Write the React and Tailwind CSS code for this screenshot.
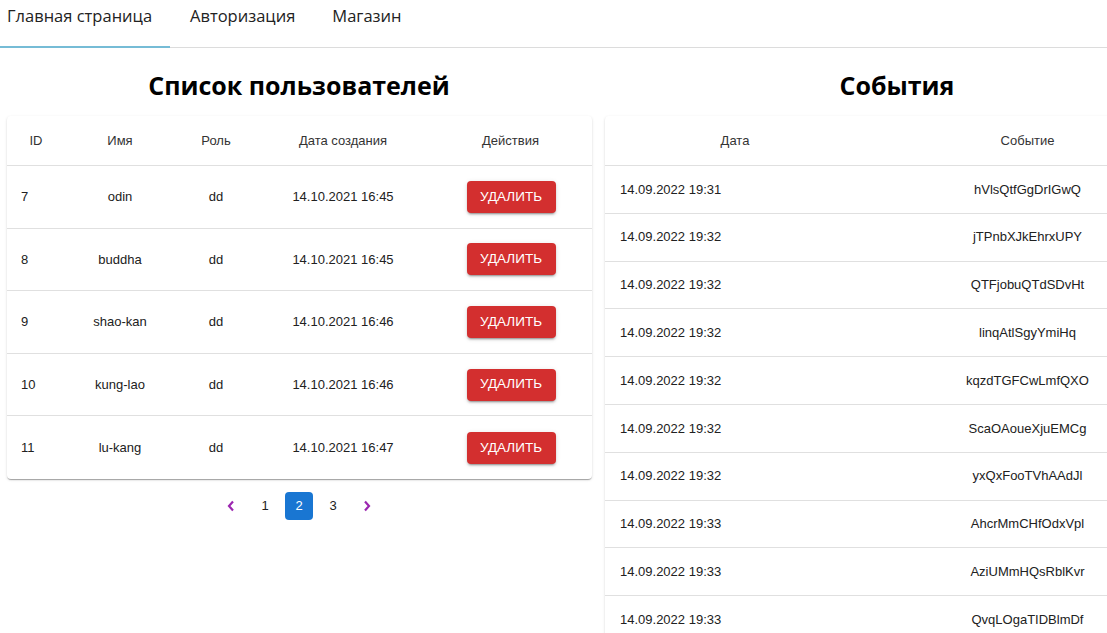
import React from "react";

const users = [
  { id: 7, name: "odin", role: "dd", date: "14.10.2021 16:45" },
  { id: 8, name: "buddha", role: "dd", date: "14.10.2021 16:45" },
  { id: 9, name: "shao-kan", role: "dd", date: "14.10.2021 16:46" },
  { id: 10, name: "kung-lao", role: "dd", date: "14.10.2021 16:46" },
  { id: 11, name: "lu-kang", role: "dd", date: "14.10.2021 16:47" },
];

const events = [
  ["14.09.2022 19:31", "hVlsQtfGgDrIGwQ"],
  ["14.09.2022 19:32", "jTPnbXJkEhrxUPY"],
  ["14.09.2022 19:32", "QTFjobuQTdSDvHt"],
  ["14.09.2022 19:32", "linqAtlSgyYmiHq"],
  ["14.09.2022 19:32", "kqzdTGFCwLmfQXO"],
  ["14.09.2022 19:32", "ScaOAoueXjuEMCg"],
  ["14.09.2022 19:32", "yxQxFooTVhAAdJl"],
  ["14.09.2022 19:33", "AhcrMmCHfOdxVpl"],
  ["14.09.2022 19:33", "AziUMmHQsRblKvr"],
  ["14.09.2022 19:33", "QvqLOgaTIDBlmDf"],
];

const sans = { fontFamily: '"Liberation Sans", Arial, sans-serif' };
const heading = { fontFamily: '"Open Sans", "Noto Sans", sans-serif' };

export default function App() {
  return (
    <div className="w-full h-screen overflow-hidden bg-white text-[#212121]" style={sans}>
      {/* Tabs */}
      <div className="w-[1196px] h-[48px] border-b border-[#dcdcdc] flex items-stretch" style={heading}>
        <div className="relative w-[170px] pl-[7px] flex items-center text-[16.5px] text-[#222] pb-[14px]">
          Главная страница
          <div className="absolute left-0 right-0 bottom-[-1px] h-[2px] bg-[#76bcd6]" />
        </div>
        <div className="ml-[20px] flex items-center text-[16.5px] text-[#222] pb-[14px]">Авторизация</div>
        <div className="ml-[37px] flex items-center text-[16.5px] text-[#222] pb-[14px]">Магазин</div>
      </div>

      <div className="w-[1196px] flex">
        {/* Left */}
        <div className="w-[598px] flex flex-col">
          <div className="h-[68px] flex items-center justify-center pt-[8px]">
            <h1 className="text-[25px] font-bold text-black" style={heading}>
              Список пользователей
            </h1>
          </div>
          <div className="ml-[7px] w-[585px] bg-white rounded-[4px] shadow-[0_2px_1px_-1px_rgba(0,0,0,0.2),0_1px_1px_0_rgba(0,0,0,0.14),0_1px_3px_0_rgba(0,0,0,0.12)] text-[13px]">
            <div className="flex h-[50px] items-center border-b border-[#e0e0e0] text-[#333]">
              <div className="w-[58px] text-center">ID</div>
              <div className="w-[110px] text-center">Имя</div>
              <div className="w-[82px] text-center">Роль</div>
              <div className="w-[172px] text-center">Дата создания</div>
              <div className="w-[163px] text-center">Действия</div>
            </div>
            {users.map((u, i) => (
              <div
                key={u.id}
                className={`flex h-[62.6px] items-center ${i < users.length - 1 ? "border-b border-[#e0e0e0]" : ""}`}
              >
                <div className="w-[58px] pl-[14px]">{u.id}</div>
                <div className="w-[110px] text-center">{u.name}</div>
                <div className="w-[82px] text-center">{u.role}</div>
                <div className="w-[172px] text-center">{u.date}</div>
                <div className="w-[163px] flex justify-center">
                  <button className="ml-[1px] w-[89px] h-[32px] rounded-[4px] bg-[#d32f2f] text-white text-[13.5px] font-medium uppercase shadow-[0_3px_1px_-2px_rgba(0,0,0,0.2),0_2px_2px_0_rgba(0,0,0,0.14),0_1px_5px_0_rgba(0,0,0,0.12)]">
                    Удалить
                  </button>
                </div>
              </div>
            ))}
          </div>
          <div className="flex justify-center items-center gap-[6px] mt-[13px] text-[13px]">
            <div className="w-[28px] h-[28px] flex items-center justify-center text-[#9c27b0]">
              <svg width="10" height="12" viewBox="0 0 10 12" fill="none" stroke="currentColor" strokeWidth="2.2">
                <path d="M7 1.5 3 6l4 4.5" />
              </svg>
            </div>
            <div className="w-[28px] h-[28px] flex items-center justify-center">1</div>
            <div className="w-[28px] h-[28px] flex items-center justify-center rounded-[4px] bg-[#1976d2] text-white">2</div>
            <div className="w-[28px] h-[28px] flex items-center justify-center">3</div>
            <div className="w-[28px] h-[28px] flex items-center justify-center text-[#9c27b0]">
              <svg width="10" height="12" viewBox="0 0 10 12" fill="none" stroke="currentColor" strokeWidth="2.2">
                <path d="M3 1.5 7 6l-4 4.5" />
              </svg>
            </div>
          </div>
        </div>

        {/* Right */}
        <div className="w-[598px] flex flex-col">
          <div className="h-[68px] flex items-center justify-center pt-[8px]">
            <h1 className="text-[25px] font-bold text-black" style={heading}>
              События
            </h1>
          </div>
          <div className="ml-[7px] w-[585px] bg-white rounded-[4px] shadow-[0_2px_1px_-1px_rgba(0,0,0,0.2),0_1px_1px_0_rgba(0,0,0,0.14),0_1px_3px_0_rgba(0,0,0,0.12)] text-[13px]">
            <div className="flex h-[50px] items-center border-b border-[#e0e0e0] text-[#333]">
              <div className="w-[260px] text-center">Дата</div>
              <div className="w-[325px] text-center">Событие</div>
            </div>
            {events.map(([d, e], i) => (
              <div key={i} className="flex h-[47.8px] items-center border-b border-[#e0e0e0]">
                <div className="w-[260px] pl-[15px]">{d}</div>
                <div className="w-[325px] text-center">{e}</div>
              </div>
            ))}
          </div>
        </div>
      </div>
    </div>
  );
}
